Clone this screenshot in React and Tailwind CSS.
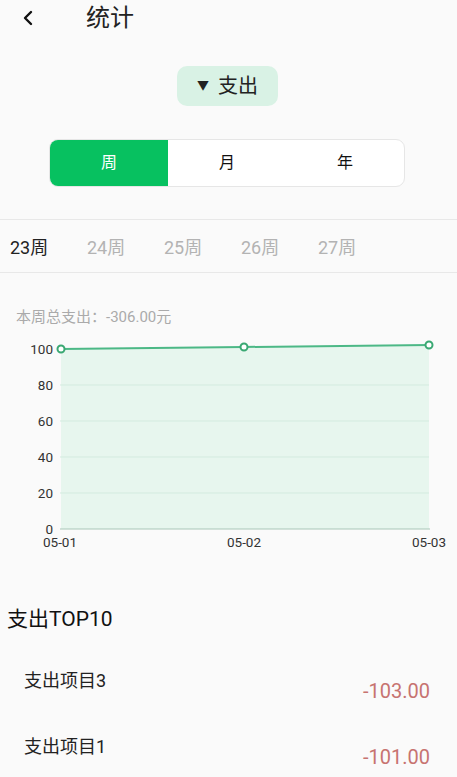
import React, { useState } from "react";

const weeks = ["23周", "24周", "25周", "26周", "27周"];
const modes = ["周", "月", "年"];
const items = [
  { name: "支出项目3", amount: "-103.00" },
  { name: "支出项目1", amount: "-101.00" },
];

function Chart() {
  // pixel space: plot x 60..429, y 0 at 528, 100 at 348 (page coords minus 330)
  const top = 330;
  const y = (v) => 528 - top - v * 1.8;
  const pts = [
    [61, 348 - top],
    [244, 346 - top],
    [429, 344 - top],
  ];
  const line = pts.map((p) => p.join(",")).join(" ");
  const area = `61,${y(0)} ${line} 429,${y(0)}`;
  return (
    <svg width="457" height="225" viewBox="0 0 457 225" className="mt-[5px] block">
      <polygon points={area} fill="#e7f6ee" />
      {[20, 40, 60, 80].map((v) => (
        <line key={v} x1="60" x2="429" y1={y(v)} y2={y(v)} stroke="#d3ebdf" strokeWidth="1" />
      ))}
      <line x1="60" x2="430" y1={y(0)} y2={y(0)} stroke="#a9c7b8" strokeWidth="1" />
      {[0, 20, 40, 60, 80, 100].map((v) => (
        <text
          key={v}
          x="53"
          y={y(v) + 5}
          textAnchor="end"
          fontSize="13.5"
          fill="#333"
          fontFamily="Roboto, sans-serif"
        >
          {v}
        </text>
      ))}
      <polyline points={line} fill="none" stroke="#4cb886" strokeWidth="2" />
      {pts.map((p, i) => (
        <circle key={i} cx={p[0]} cy={p[1]} r="3.5" fill="#fff" stroke="#3aa873" strokeWidth="2" />
      ))}
      {[
        [60, "05-01"],
        [244, "05-02"],
        [429, "05-03"],
      ].map(([x, t]) => (
        <text
          key={t}
          x={x}
          y={216}
          textAnchor="middle"
          fontSize="13.5"
          fill="#333"
          fontFamily="Roboto, sans-serif"
        >
          {t}
        </text>
      ))}
    </svg>
  );
}

export default function App() {
  const [mode, setMode] = useState("周");
  const [week, setWeek] = useState("23周");

  return (
    <div
      className="min-h-screen w-[457px] overflow-hidden bg-[#fafafa] text-[#222]"
      style={{ fontFamily: 'Roboto, "Noto Sans CJK SC", sans-serif' }}
    >
      <div className="flex h-[36px] items-center">
        <svg width="12" height="16" viewBox="0 0 12 16" className="ml-[22px]">
          <path d="M9 2 L3 8 L9 14" fill="none" stroke="#111" strokeWidth="2.4" strokeLinecap="round" strokeLinejoin="round" />
        </svg>
        <h1 className="ml-[52px] text-[24px] leading-[32px] font-normal text-[#222]">统计</h1>
      </div>

      <div className="mt-[30px] flex justify-center">
        <button className="flex h-[40px] w-[101px] -translate-x-[1px] items-center justify-center gap-[9px] rounded-[10px] bg-[#d9f2e5] text-[20px] text-[#222]">
          <span className="text-[12px]">▼</span>
          <span>支出</span>
        </button>
      </div>

      <div className="mt-[33px] flex">
        <div className="ml-[49px] flex h-[48px] w-[356px] overflow-hidden rounded-[9px] border border-[#e6e6e6] bg-white">
          {modes.map((m) => (
            <button
              key={m}
              onClick={() => setMode(m)}
              className={
                mode === m
                  ? "flex-1 bg-[#07c160] text-[16px] text-white"
                  : "flex-1 text-[16px] text-[#111]"
              }
            >
              {m}
            </button>
          ))}
        </div>
      </div>

      <div className="mt-[32px] flex h-[54px] items-center border-y border-[#e8e8e8] pl-[10px] pt-[3px]">
        {weeks.map((w) => (
          <button
            key={w}
            onClick={() => setWeek(w)}
            className={
              week === w
                ? "w-[77px] text-left text-[18px] text-[#222]"
                : "w-[77px] text-left text-[18px] text-[#b3b3b3]"
            }
          >
            {w}
          </button>
        ))}
      </div>

      <p className="mt-[35px] pl-[16px] text-[15px] leading-[18px] text-[#aaa]">本周总支出：-306.00元</p>

      <Chart />

      <h2 className="mt-[49px] pl-[7px] text-[21px] leading-[28px] font-normal text-[#111]">支出TOP10</h2>

      <div className="mt-[36px] flex flex-col gap-[32px]">
        {items.map((it) => (
          <div key={it.name} className="flex items-start justify-between pl-[24px] pr-[27px]">
            <span className="text-[18px] leading-[24px] text-[#222]">{it.name}</span>
            <span className="mt-[10px] text-[20px] leading-[24px] text-[#c77370]">{it.amount}</span>
          </div>
        ))}
      </div>
    </div>
  );
}
